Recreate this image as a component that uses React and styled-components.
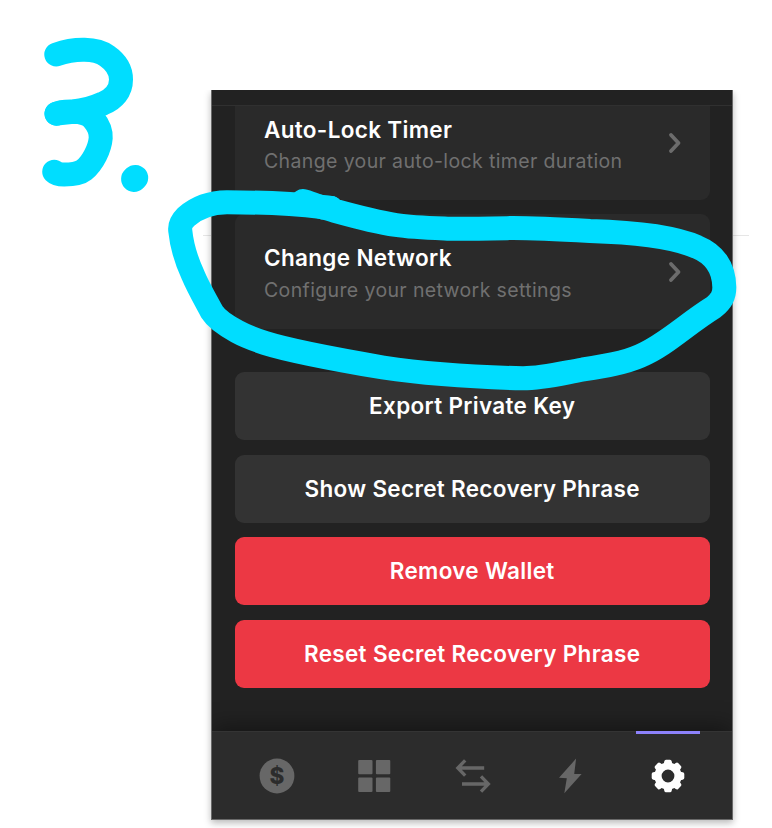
import React from "react";
import styled, { createGlobalStyle } from "styled-components";

const GlobalStyle = createGlobalStyle`
  * { box-sizing: border-box; }
  html, body { margin: 0; background: #fff; overflow: hidden; }
  body { font-family: Inter, "Liberation Sans", sans-serif; }
  button { font: inherit; border: 0; margin: 0; padding: 0; color: inherit; background: none; }
`;

const Page = styled.main`
  position: relative;
  width: 772px;
  height: 828px;
  padding: 90px 39px 0 211px;
  overflow: hidden;
`;

const PageRule = styled.div`
  position: absolute;
  left: 203px;
  top: 235px;
  width: 546px;
  height: 1px;
  background: #e6e6e6;
`;

const ShadowClip = styled.div`
  position: relative;
  width: 560px;
  margin-left: -20px;
  padding: 0 18px 12px 20px;
  overflow: hidden;
`;

const Wallet = styled.section`
  display: flex;
  flex-direction: column;
  width: 522px;
  height: 730px;
  background: #222;
  border: solid #696969;
  border-width: 0 1px 1px 1px;
  box-shadow: 0 3px 7px rgba(0, 0, 0, 0.28);
`;

const Header = styled.header`
  flex: none;
  height: 16px;
  border-bottom: 1.5px solid #303030;
`;

const Content = styled.div`
  flex: 1;
  display: flex;
  flex-direction: column;
  padding: 0 22.5px 0 22.8px;
`;

const SettingCard = styled.button`
  display: flex;
  align-items: flex-start;
  justify-content: space-between;
  height: ${(p) => (p.$clipped ? 94 : 114.4)}px;
  margin-bottom: ${(p) => (p.$clipped ? 14.4 : 43.5)}px;
  padding: ${(p) => (p.$clipped ? 10 : 29.8)}px 28px 0 29.2px;
  border-radius: ${(p) => (p.$clipped ? "0 0 9px 9px" : "9px")};
  background: #2a2a2a;
  text-align: left;
`;

const SettingText = styled.span`
  display: flex;
  flex-direction: column;
`;

const SettingTitle = styled.span`
  font-size: 22.5px;
  line-height: 28px;
  font-weight: 600;
  letter-spacing: 0.33px;
  color: #fff;
`;

const SettingHint = styled.span`
  margin-top: 5.4px;
  font-size: 19.5px;
  line-height: 25px;
  letter-spacing: 0.37px;
  color: #707070;
`;

const ChevronIcon = styled.svg`
  width: 14px;
  height: 22px;
  margin-top: 16.4px;
`;

const Actions = styled.div`
  display: flex;
  flex-direction: column;
  gap: 14.5px;
`;

const Action = styled.button`
  height: 68px;
  padding-bottom: 1px;
  border-radius: 9px;
  background: ${(p) => (p.$danger ? "#ec3844" : "#333")};
  color: #fff;
  font-size: 22.5px;
  font-weight: 600;
  letter-spacing: 0.32px;
  text-align: center;
`;

const NavBar = styled.nav`
  flex: none;
  display: flex;
  height: 88px;
  padding: 1px 15px 0 16.5px;
  border-top: 1px solid #343434;
  background: #2c2c2c;
  box-shadow: 0 -4px 22px rgba(0, 0, 0, 0.42);
  clip-path: inset(-40px 0 0 0);
`;

const NavItem = styled.button`
  position: relative;
  flex: 1;
  display: flex;
  align-items: center;
  justify-content: center;
  color: ${(p) => (p.$active ? "#fff" : "#676767")};

  &::before {
    content: "";
    position: absolute;
    top: -2px;
    width: 64px;
    height: 3px;
    background: ${(p) => (p.$active ? "#8d82fb" : "transparent")};
  }
`;

const NavIcon = styled.svg`
  width: 40px;
  height: 40px;
  overflow: visible;
`;

const Coin = styled.text`
  font: 800 22.5px Inter, sans-serif;
  fill: #2c2c2c;
`;

const Marker = styled.svg`
  position: absolute;
  inset: 0;
  width: 772px;
  height: 828px;
  pointer-events: none;
`;

const Chevron = () => (
  <ChevronIcon viewBox="0 0 14 22" fill="none" stroke="#6c6c6c" strokeWidth="3.8" strokeLinecap="round" strokeLinejoin="round">
    <path d="M3 3 L10.5 11 L3 19" />
  </ChevronIcon>
);

const Setting = ({ title, hint, clipped }) => (
  <SettingCard $clipped={clipped}>
    <SettingText>
      <SettingTitle>{title}</SettingTitle>
      <SettingHint>{hint}</SettingHint>
    </SettingText>
    <Chevron />
  </SettingCard>
);

const teeth = [0, 45, 90, 135, 180, 225, 270, 315];

const icons = {
  balance: (
    <>
      <circle cx="20" cy="20" r="17.4" fill="currentColor" />
      <Coin x="20" y="28" textAnchor="middle">$</Coin>
    </>
  ),
  apps: (
    <g fill="currentColor">
      <rect x="3.2" y="4" width="14.3" height="14.3" rx="1" />
      <rect x="20.9" y="4" width="14.4" height="14.3" rx="1" />
      <rect x="3.2" y="21.6" width="14.3" height="14.3" rx="1" />
      <rect x="20.9" y="21.6" width="14.4" height="14.3" rx="1" />
    </g>
  ),
  swap: (
    <g fill="none" stroke="currentColor" strokeWidth="3.3">
      <path d="M31.2 12 H5.2 M12.2 4.3 L4.8 12 L12.2 19.7" />
      <path d="M9 28 H35 M28 20.3 L35.4 28 L28 35.7" />
    </g>
  ),
  activity: <path d="M26.1 2.6 L24.2 17.9 H31.6 L14.3 37.3 L16.8 22.3 L9 21.8 Z" fill="currentColor" />,
  settings: (
    <g>
      <circle cx="20" cy="20" r="10" fill="none" stroke="currentColor" strokeWidth="7.2" />
      {teeth.map((angle) => (
        <path
          key={angle}
          d="M15.6 8.8 L16.3 5.3 Q16.6 3.7 18 3.7 H22 Q23.4 3.7 23.7 5.3 L24.4 8.8 Z"
          fill="currentColor"
          transform={`rotate(${angle} 20 20)`}
        />
      ))}
    </g>
  ),
};

export default function App() {
  return (
    <Page>
      <GlobalStyle />
      <PageRule />
      <ShadowClip>
        <Wallet>
          <Header />
          <Content>
            <Setting clipped title="Auto-Lock Timer" hint="Change your auto-lock timer duration" />
            <Setting title="Change Network" hint="Configure your network settings" />
            <Actions>
              <Action>Export Private Key</Action>
              <Action>Show Secret Recovery Phrase</Action>
              <Action $danger>Remove Wallet</Action>
              <Action $danger>Reset Secret Recovery Phrase</Action>
            </Actions>
          </Content>
          <NavBar>
            {Object.entries(icons).map(([name, drawing]) => (
              <NavItem key={name} $active={name === "settings"} aria-label={name}>
                <NavIcon viewBox="0 0 40 40">{drawing}</NavIcon>
              </NavItem>
            ))}
          </NavBar>
        </Wallet>
      </ShadowClip>
      <Marker viewBox="0 0 772 828" fill="none" stroke="#00ddff" strokeWidth="24" strokeLinecap="round" strokeLinejoin="round">
        <path d="M56.3 54.5 C75 48 96 48 107 56 C117 63 121 71 121 79.5 C121 91 114 99 103 103.5 C91 109 79 111 72.7 111.5 C65 111.3 60 112 56.5 113.7" />
        <path d="M56.5 113.7 L73 111.8 C81 111.8 90 114 94 120 C99 126 101 131 100.7 138 C100 148 93 163 84 170 C79 174 70 174.5 64 174.6 C60 174.6 56 173.5 54.2 171.7" />
        <path d="M134 179 L135.3 177.8" strokeWidth="25.8" />
        <path d="M303 201 C309 202 316 206 323 207.5 L331 208" />
        <path d="M331 208 L322 207 C300 204.5 258 202.3 227 202.3 C207 202.5 195 209 186 217 C181 222 179.5 226 180.3 231 C182 248 187 262 193 275 C198 287 205 299 212 312 C217 320 227 326 237 331.5 C247 337 256 340 265 343 C284 349 333 359 383 367.5 C420 373 468 377 523 378.3 C543 378.3 563 373 583 369.5 C605 366 624 363 640 356 C666 345 685 325 714 307 C721 301 724.5 296 724.3 287 C724 267 714 254 697 247 C670 235 625 232 590 231 C555 229 532 228 513 228 C490 228.5 470 229 450 228.8 C430 228 412 227.5 396 225 C370 221 347 214 323 207.5" />
      </Marker>
    </Page>
  );
}
